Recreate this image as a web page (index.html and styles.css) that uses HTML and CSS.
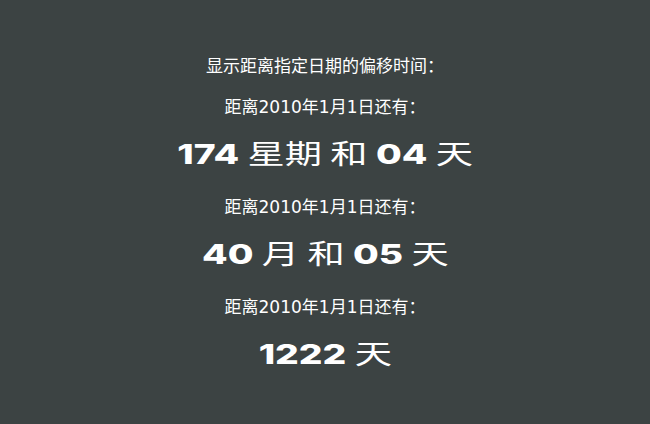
FILE: index.html
```html
<!DOCTYPE html>
<html lang="zh">
<head>
    <meta charset="UTF-8">
    <meta name="viewport" content="width=device-width, initial-scale=1.0">
    <title>日期偏移</title>
    <link rel="stylesheet" href="styles.css">
</head>
<body>
    <main class="page">
        <p class="title">显示距离指定日期的偏移时间：</p>

        <!-- weeks and days -->
        <section class="offset">
            <p class="label">距离2010年1月1日还有：</p>
            <p class="value"><span class="num">174</span> 星期 和 <span class="num">04</span> 天</p>
        </section>

        <!-- months and days -->
        <section class="offset">
            <p class="label">距离2010年1月1日还有：</p>
            <p class="value"><span class="num">40</span> 月 和 <span class="num">05</span> 天</p>
        </section>

        <!-- days only -->
        <section class="offset">
            <p class="label">距离2010年1月1日还有：</p>
            <p class="value"><span class="num">1222</span> 天</p>
        </section>
    </main>
</body>
</html>
```

FILE: styles.css
```css
body {
    margin: 0;
    padding: 0;
    background-color: #3c4343;
    color: #ffffff;
    font-family: "DejaVu Sans", "Noto Sans CJK SC", sans-serif;
}
.page {
    padding-top: 54px;
    text-align: center;
}
p {
    margin: 0;
}
.title {
    font-size: 17px;
    line-height: 24px;
    margin-bottom: 16.5px;
}
.offset {
    margin-bottom: 20px;
}
.label {
    font-size: 17px;
    line-height: 24px;
}
.value {
    display: inline-block;
    margin-top: 14px;
    font-family: "Noto Sans CJK SC", sans-serif;
    font-size: 27px;
    line-height: 40px;
    transform: scaleX(1.38);
}
.value .num {
    font-family: Inter, "Noto Sans", sans-serif;
    font-weight: 800;
}
```
